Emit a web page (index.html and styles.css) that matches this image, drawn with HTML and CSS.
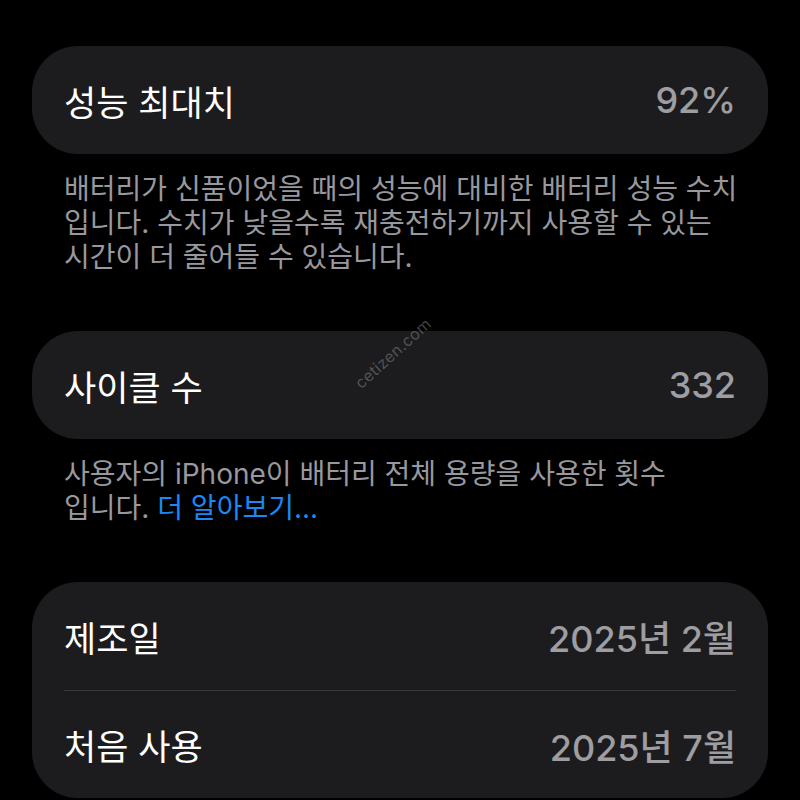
FILE: index.html
```html
<!DOCTYPE html>
<html lang="ko">

<head>
    <meta charset="UTF-8">
    <meta name="viewport" content="width=device-width, initial-scale=1.0">
    <title>배터리 상태</title>
    <link rel="stylesheet" href="styles.css">
</head>

<body>
    <div class="battery-page">
        <div class="group">
            <div class="row">
                <span class="label">성능 최대치</span>
                <span class="value">92%</span>
            </div>
        </div>
        <p class="footer">배터리가 신품이었을 때의 성능에 대비한 배터리 성능 수치<br>입니다. 수치가 낮을수록 재충전하기까지 사용할 수 있는<br>시간이 더 줄어들 수 있습니다.</p>

        <div class="group">
            <div class="row">
                <span class="label">사이클 수</span>
                <span class="value">332</span>
            </div>
        </div>
        <p class="footer">사용자의 iPhone이 배터리 전체 용량을 사용한 횟수<br>입니다. <a href="#" class="link">더 알아보기...</a></p>

        <div class="group">
            <div class="row">
                <span class="label">제조일</span>
                <span class="value">2025년 2월</span>
            </div>
            <div class="row">
                <span class="label">처음 사용</span>
                <span class="value">2025년 7월</span>
            </div>
        </div>

        <span class="watermark">cetizen.com</span>
    </div>
</body>

</html>
```

FILE: styles.css
```css
* {
    margin: 0;
    padding: 0;
    box-sizing: border-box;
    font-family: "Inter", "Noto Sans CJK KR", sans-serif;
}

body {
    background-color: #000;
    color: #fff;
}

.battery-page {
    position: relative;
    padding: 46px 32px 0;
    height: 800px;
    overflow: hidden;
}

.group {
    background-color: #1c1c1e;
    border-radius: 46px;
}

.row {
    display: flex;
    justify-content: space-between;
    align-items: center;
    height: 108px;
    margin: 0 32px;
}

.row + .row {
    border-top: 1px solid #38383a;
}

.label {
    font-size: 35px;
    color: #fff;
}

.value {
    font-size: 36px;
    font-weight: 500;
    color: #9d9da2;
}

.footer {
    padding: 18px 12px 0 32px;
    margin-bottom: 57px;
    font-size: 28px;
    line-height: 34px;
    color: #98989e;
}

.link {
    color: #1a88f5;
    text-decoration: none;
}

.watermark {
    position: absolute;
    left: 345px;
    top: 343px;
    transform: rotate(-42deg);
    font-size: 16px;
    color: rgba(150, 150, 150, 0.45);
    letter-spacing: 0.3px;
}
```
